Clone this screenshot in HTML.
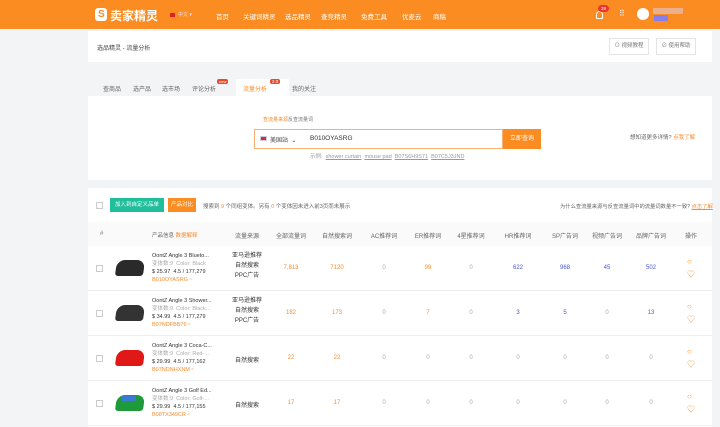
<!DOCTYPE html>
<html><head><meta charset="utf-8"><style>
*{margin:0;padding:0;box-sizing:border-box}
body{width:720px;height:427px;overflow:hidden;background:#f3f4f6;font-family:"Liberation Sans","Noto Sans CJK SC",sans-serif;font-size:6px;color:#555;position:relative}
.a{position:absolute;white-space:nowrap}
.hd{position:absolute;left:0;top:0;width:720px;height:29px;background:#fa8c22}
.hd .n{position:absolute;top:11px;color:#fff;font-size:6.5px;white-space:nowrap}
.card{position:absolute;background:#fff}
.o{color:#f98c2d}.b{color:#4a56d0}
.num{position:absolute;transform:translateX(-50%);font-size:6px;white-space:nowrap}
.cb{position:absolute;width:7px;height:7px;border:1px solid #ccc;background:#fff}
.row{position:absolute;left:88px;width:624px;height:45px;border-bottom:1px solid #eee;background:#fff}
.ic{font-size:8px;line-height:13px}
</style></head><body>
<div class="hd">
 <div class="a" style="left:95px;top:8px;width:12px;height:13px;background:#fff;border-radius:3px"></div>
 <div class="a" style="left:98px;top:9px;color:#fa8c22;font-weight:bold;font-size:10px">S</div>
 <div class="a" style="left:110px;top:7px;color:#fff;font-size:12px;font-weight:bold">卖家精灵</div>
 <div class="a" style="left:170px;top:13px;width:5px;height:4px;background:#d22"></div>
 <div class="a" style="left:178px;top:11px;color:#fde;font-size:5px">中文 ▾</div>
 <div class="n" style="left:216px">首页</div>
 <div class="n" style="left:243px">关键词精灵</div>
 <div class="n" style="left:285px">选品精灵</div>
 <div class="n" style="left:321px">查竞精灵</div>
 <div class="n" style="left:361px">免费工具</div>
 <div class="n" style="left:402px">优麦云</div>
 <div class="n" style="left:433px">商稿</div>
 <div class="a" style="left:596px;top:11px;width:7px;height:8px;border:1.3px solid #fff;border-radius:4px 4px 1px 1px"></div>
 <div class="a" style="left:598px;top:5px;width:11px;height:7px;background:#e33;border-radius:4px;color:#fff;font-size:4.5px;text-align:center;line-height:7px">39</div>
 <div class="a" style="left:619px;top:10px;color:#fff;font-size:8px;line-height:8px">⠿</div>
 <div class="a" style="left:637px;top:8px;width:12px;height:12px;background:#fff;border-radius:50%"></div>
 <div class="a" style="left:653px;top:8px;width:30px;height:6px;background:#e8b8a8;opacity:.8"></div>
 <div class="a" style="left:654px;top:15px;width:14px;height:6px;background:#8a7ee8"></div>
</div>
<div class="card" style="left:88px;top:31px;width:624px;height:31px"></div>
<div class="a" style="left:97px;top:43px;font-size:6px;color:#444">选品精灵 - 流量分析</div>
<div class="a" style="left:609px;top:38px;width:40px;height:17px;border:1px solid #e5e5e5;font-size:5.5px;color:#777;line-height:15px;text-align:center">⊙ 视频教程</div>
<div class="a" style="left:656px;top:38px;width:40px;height:17px;border:1px solid #e5e5e5;font-size:5.5px;color:#777;line-height:15px;text-align:center">⊘ 使用帮助</div>
<div class="card" style="left:88px;top:96px;width:624px;height:84px"></div>
<div class="card" style="left:236px;top:79px;width:53px;height:17px"></div>
<div class="a" style="left:103px;top:84px;font-size:6px;color:#666">查商品</div>
<div class="a" style="left:133px;top:84px;font-size:6px;color:#666">选产品</div>
<div class="a" style="left:162px;top:84px;font-size:6px;color:#666">选市场</div>
<div class="a" style="left:192px;top:84px;font-size:6px;color:#666">评论分析</div>
<div class="a" style="left:217px;top:79px;background:#e84a2a;color:#fff;font-size:4px;padding:0 2px;border-radius:2px">new</div>
<div class="a o" style="left:243px;top:84px;font-size:6px">流量分析</div>
<div class="a" style="left:270px;top:79px;background:#e84a2a;color:#fff;font-size:4.5px;padding:0 2px;border-radius:2px">2.0</div>
<div class="a" style="left:292px;top:84px;font-size:6px;color:#666">我的关注</div>
<div class="a o" style="left:263px;top:116px;font-size:5px">查流量来源</div>
<div class="a" style="left:288px;top:116px;font-size:5px;color:#777">反查流量词</div>
<div class="a" style="left:254px;top:129px;width:249px;height:20px;border:1px solid #f9b070;background:#fff"></div>
<div class="a" style="left:260px;top:136px;width:7px;height:5px;background:#c33;border:1px solid #ccd"></div>
<div class="a" style="left:270px;top:135px;font-size:6px;color:#444">美国站 &nbsp;⌄</div>
<div class="a" style="left:310px;top:135px;font-size:6.5px;color:#333">B010OYASRG</div>
<div class="a" style="left:503px;top:129px;width:38px;height:20px;background:#fa8c22;color:#fff;font-size:6px;line-height:20px;text-align:center">立即查询</div>
<div class="a" style="left:310px;top:152px;font-size:5.5px;color:#999">示例: &nbsp;<u>shower curtain</u> &nbsp;<u>mouse pad</u> &nbsp;<u>B07S6H9S71</u> &nbsp;<u>B07C5J3JND</u></div>
<div class="a" style="left:630px;top:133px;font-size:5.5px;color:#666">想知道更多详情? <span class="o">点我了解</span></div>
<div class="card" style="left:88px;top:188px;width:624px;height:239px"></div>
<div class="cb" style="left:96px;top:202px"></div>
<div class="a" style="left:110px;top:198px;width:54px;height:14px;background:#1fbf9c;color:#fff;font-size:5.5px;line-height:14px;text-align:center">加入到自定义品单</div>
<div class="a" style="left:168px;top:198px;width:28px;height:14px;background:#fa8c22;color:#fff;font-size:5.5px;line-height:14px;text-align:center">产品对比</div>
<div class="a" style="left:203px;top:202px;font-size:5.5px;color:#666">搜索到 <span class="o">9</span> 个同组变体。另有 <span class="o">0</span> 个变体因未进入前3页而未展示</div>
<div class="a" style="left:560px;top:202px;font-size:5.3px;color:#666">为什么查流量来源与反查流量词中的流量词数量不一致? <span class="o"><u>点击了解</u></span></div>
<div class="a" style="left:88px;top:222px;width:624px;height:24px;background:#fafafa"></div>
<div class="a" style="left:100px;top:231px;font-size:6px;color:#777">#</div>
<div class="a" style="left:152px;top:231px;font-size:5.5px;color:#666">产品信息 <span class="o">数据解释</span></div>
<div class="num" style="left:247px;top:231px;color:#666">流量来源</div>
<div class="num" style="left:291px;top:231px;color:#666">全部流量词</div>
<div class="num" style="left:337px;top:231px;color:#666">自然搜索词</div>
<div class="num" style="left:384px;top:231px;color:#666">AC推荐词</div>
<div class="num" style="left:428px;top:231px;color:#666">ER推荐词</div>
<div class="num" style="left:471px;top:231px;color:#666">4星推荐词</div>
<div class="num" style="left:518px;top:231px;color:#666">HR推荐词</div>
<div class="num" style="left:565px;top:231px;color:#666">SP广告词</div>
<div class="num" style="left:607px;top:231px;color:#666">视频广告词</div>
<div class="num" style="left:651px;top:231px;color:#666">品牌广告词</div>
<div class="num" style="left:691px;top:231px;color:#666">操作</div>

<div class="row" style="top:246px"></div>
<div class="row" style="top:291px"></div>
<div class="row" style="top:336px"></div>
<div class="row" style="top:381px"></div>

<div class="cb" style="left:96px;top:265px"></div>
<div class="a" style="left:116px;top:260px;width:28px;height:16px;background:#2a2a2a;border-radius:8px 8px 3px 3px;transform:skewX(-8deg)"></div>
<div class="a" style="left:152px;top:252px;font-size:5.5px;color:#333;line-height:8px">OontZ Angle 3 Blueto...<br><span style="color:#aaa">变体数:9 &nbsp;Color: Black</span><br>$ 25.97 &nbsp;4.5 / 177,279<br><span class="o">B010OYASRG ▫</span></div>
<div class="num" style="left:247px;top:251px;color:#333;line-height:10px;text-align:center">亚马逊推荐<br>自然搜索<br>PPC广告</div>
<div class="num o" style="left:291px;top:265px">7,813</div><div class="num o" style="left:337px;top:265px">7120</div><div class="num" style="left:384px;top:265px;color:#aaa">0</div><div class="num o" style="left:428px;top:265px">99</div><div class="num" style="left:471px;top:265px;color:#aaa">0</div><div class="num b" style="left:518px;top:265px">622</div><div class="num b" style="left:565px;top:265px">968</div><div class="num b" style="left:607px;top:265px">45</div><div class="num b" style="left:651px;top:265px">502</div>
<div class="num o ic" style="left:691px;top:255px">○<br>♡</div>

<div class="cb" style="left:96px;top:310px"></div>
<div class="a" style="left:116px;top:305px;width:28px;height:16px;background:#333;border-radius:8px 8px 3px 3px;transform:skewX(-8deg)"></div>
<div class="a" style="left:152px;top:297px;font-size:5.5px;color:#333;line-height:8px">OontZ Angle 3 Shower...<br><span style="color:#aaa">变体数:9 &nbsp;Color: Black...</span><br>$ 34.99 &nbsp;4.5 / 177,279<br><span class="o">B07NDFBB76 ▫</span></div>
<div class="num" style="left:247px;top:296px;color:#333;line-height:10px;text-align:center">亚马逊推荐<br>自然搜索<br>PPC广告</div>
<div class="num o" style="left:291px;top:310px">182</div><div class="num o" style="left:337px;top:310px">173</div><div class="num" style="left:384px;top:310px;color:#aaa">0</div><div class="num o" style="left:428px;top:310px">7</div><div class="num" style="left:471px;top:310px;color:#aaa">0</div><div class="num b" style="left:518px;top:310px">3</div><div class="num b" style="left:565px;top:310px">5</div><div class="num" style="left:607px;top:310px;color:#aaa">0</div><div class="num b" style="left:651px;top:310px">13</div>
<div class="num o ic" style="left:691px;top:300px">○<br>♡</div>

<div class="cb" style="left:96px;top:355px"></div>
<div class="a" style="left:116px;top:350px;width:28px;height:16px;background:#e01818;border-radius:8px 8px 3px 3px;transform:skewX(-8deg)"></div>
<div class="a" style="left:152px;top:342px;font-size:5.5px;color:#333;line-height:8px">OontZ Angle 3 Coca-C...<br><span style="color:#aaa">变体数:9 &nbsp;Color: Red-...</span><br>$ 29.99 &nbsp;4.5 / 177,162<br><span class="o">B07NDNHXNM ▫</span></div>
<div class="num" style="left:247px;top:355px;color:#333">自然搜索</div>
<div class="num o" style="left:291px;top:355px">22</div><div class="num o" style="left:337px;top:355px">22</div><div class="num" style="left:384px;top:355px;color:#aaa">0</div><div class="num" style="left:428px;top:355px;color:#aaa">0</div><div class="num" style="left:471px;top:355px;color:#aaa">0</div><div class="num" style="left:518px;top:355px;color:#aaa">0</div><div class="num" style="left:565px;top:355px;color:#aaa">0</div><div class="num" style="left:607px;top:355px;color:#aaa">0</div><div class="num" style="left:651px;top:355px;color:#aaa">0</div>
<div class="num o ic" style="left:691px;top:345px">○<br>♡</div>

<div class="cb" style="left:96px;top:400px"></div>
<div class="a" style="left:116px;top:395px;width:28px;height:16px;background:#1f9a3a;border-radius:8px 8px 3px 3px;transform:skewX(-8deg)"></div>
<div class="a" style="left:122px;top:396px;width:14px;height:5px;background:#3a7ad0"></div>
<div class="a" style="left:152px;top:387px;font-size:5.5px;color:#333;line-height:8px">OontZ Angle 3 Golf Ed...<br><span style="color:#aaa">变体数:9 &nbsp;Color: Golf-...</span><br>$ 29.99 &nbsp;4.5 / 177,155<br><span class="o">B08TX349CR ▫</span></div>
<div class="num" style="left:247px;top:400px;color:#333">自然搜索</div>
<div class="num o" style="left:291px;top:400px">17</div><div class="num o" style="left:337px;top:400px">17</div><div class="num" style="left:384px;top:400px;color:#aaa">0</div><div class="num" style="left:428px;top:400px;color:#aaa">0</div><div class="num" style="left:471px;top:400px;color:#aaa">0</div><div class="num" style="left:518px;top:400px;color:#aaa">0</div><div class="num" style="left:565px;top:400px;color:#aaa">0</div><div class="num" style="left:607px;top:400px;color:#aaa">0</div><div class="num" style="left:651px;top:400px;color:#aaa">0</div>
<div class="num o ic" style="left:691px;top:390px">○<br>♡</div>
</body></html>
